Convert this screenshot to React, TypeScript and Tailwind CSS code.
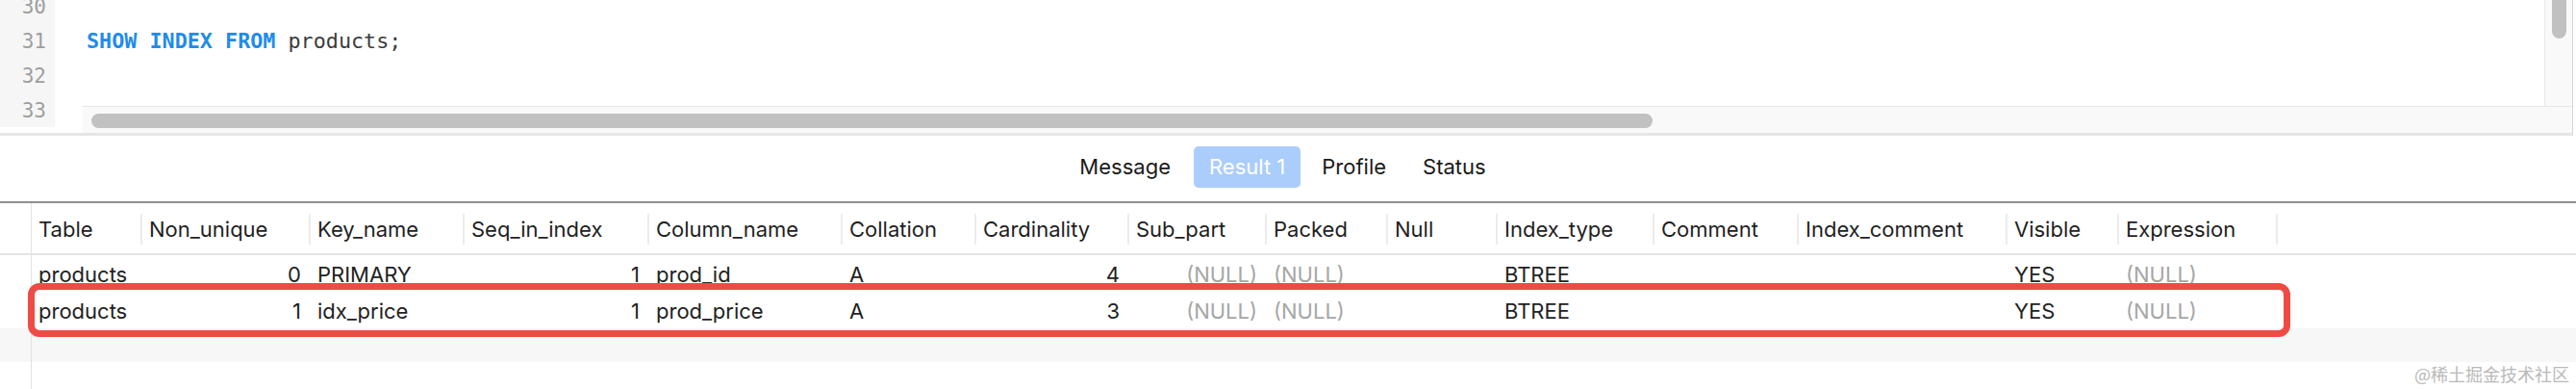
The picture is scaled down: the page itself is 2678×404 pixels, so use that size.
import React from "react";

const lineNumbers = [30, 31, 32, 33];

type Column = { name: string; width: string; right?: boolean };

const columns: Column[] = [
  { name: "Table", width: "w-[115px]" },
  { name: "Non_unique", width: "w-[175px]", right: true },
  { name: "Key_name", width: "w-[160px]" },
  { name: "Seq_in_index", width: "w-[192px]", right: true },
  { name: "Column_name", width: "w-[201px]" },
  { name: "Collation", width: "w-[139px]" },
  { name: "Cardinality", width: "w-[159px]", right: true },
  { name: "Sub_part", width: "w-[143px]", right: true },
  { name: "Packed", width: "w-[126px]" },
  { name: "Null", width: "w-[114px]" },
  { name: "Index_type", width: "w-[163px]" },
  { name: "Comment", width: "w-[150px]" },
  { name: "Index_comment", width: "w-[217px]" },
  { name: "Visible", width: "w-[116px]" },
  { name: "Expression", width: "w-[165px]" },
];

const rows: (string | null)[][] = [
  ["products", "0", "PRIMARY", "1", "prod_id", "A", "4", null, null, "", "BTREE", "", "", "YES", null],
  ["products", "1", "idx_price", "1", "prod_price", "A", "3", null, null, "", "BTREE", "", "", "YES", null],
];

export default function App() {
  return (
    <div className="relative h-[404px] w-[2678px] overflow-hidden bg-white font-['Inter',sans-serif] text-[#1f1f1f]">
      <Editor />
      <Tabs />
      <ResultTable />
      {/* red highlight drawn over the second row */}
      <div className="pointer-events-none absolute left-[29px] top-[294px] h-[56px] w-[2352px] rounded-[12px] border-[7px] border-[#ef4b45]" />
      <span className="absolute bottom-[4px] right-[7px] font-['Noto_Sans_CJK_SC',sans-serif] text-[18px] leading-[24px] text-[#b9b9b9]">
        @稀土掘金技术社区
      </span>
    </div>
  );
}

function Editor() {
  return (
    <div className="relative mr-[3px] h-[141px] overflow-hidden border-r border-b-[3px] border-r-[#d4d4d4] border-b-[#e6e6e6]">
      <div className="-mt-[11px] flex">
        <div className="h-[143px] w-[57px] shrink-0 bg-[#f6f6f6] pr-[9px] text-right font-['DejaVu_Sans_Mono',monospace] text-[21px] leading-[36px] text-[#9e9e9e]">
          {lineNumbers.map((n) => (
            <div key={n}>{n}</div>
          ))}
        </div>
        <div className="flex-1 pl-[33px] font-['DejaVu_Sans_Mono',monospace] text-[21.75px] leading-[36px] whitespace-pre">
          <div> </div>
          <div>
            <span className="font-bold text-[#1f8ceb]">SHOW INDEX FROM</span>
            <span className="text-[#3d3d3d]"> products;</span>
          </div>
        </div>
      </div>
      {/* horizontal scrollbar */}
      <div className="absolute left-[86px] right-0 top-[110px] h-[28px] border-t border-[#e6e6e6] bg-[#f9f9f9]">
        <div className="ml-[9px] mt-[7px] h-[15px] w-[1623px] rounded-full bg-[#c1c1c1]" />
      </div>
      {/* vertical scrollbar */}
      <div className="absolute right-0 top-0 h-[110px] w-[29px] border-l border-[#e8e8e8] bg-[#f9f9f9]">
        <div className="ml-[7px] h-[40px] w-[15px] rounded-b-full bg-[#c1c1c1]" />
      </div>
    </div>
  );
}

function Tabs() {
  return (
    <div className="flex h-[70px] items-start justify-center border-b-2 border-[#8f8f8f] pr-[11px] pt-[11px] text-[22px] text-[#1a1a1a]">
      <span className="mr-[24px] leading-[43px]">Message</span>
      <span className="mr-[22px] rounded-[5px] bg-[#aacdfb] px-[16px] leading-[43px] text-white">Result 1</span>
      <span className="mr-[38px] leading-[43px]">Profile</span>
      <span className="leading-[43px]">Status</span>
    </div>
  );
}

function ResultTable() {
  return (
    <div className="text-[22px]">
      <div className="flex h-[54px] border-b-2 border-[#e4e4e4]">
        <div className="w-[33px] shrink-0 border-r border-[#e2e2e2]" />
        {columns.map((c) => (
          <div key={c.name} className={`${c.width} flex shrink-0 items-center justify-between pl-[7px] pt-[2px]`}>
            <span>{c.name}</span>
            <span className="h-[32px] w-[2px] bg-[#ececec]" />
          </div>
        ))}
      </div>
      {rows.map((row, i) => (
        <div key={i} className="flex h-[38px] items-center pt-[3px]">
          <div className="-mt-[3px] h-[38px] w-[33px] shrink-0 border-r border-[#e2e2e2]" />
          {columns.map((c, j) => (
            <div
              key={c.name}
              className={`${c.width} shrink-0 pl-[7px] pr-[10px] ${c.right ? "text-right" : "text-left"} ${row[j] === null ? "text-[#a6a6a6]" : "text-[#222222]"}`}
            >
              {row[j] === null ? "(NULL)" : row[j]}
            </div>
          ))}
        </div>
      ))}
      <div className="flex h-[35px] bg-[#f7f7f7]">
        <div className="w-[33px] shrink-0 border-r border-[#e2e2e2]" />
      </div>
      <div className="flex h-[40px]">
        <div className="w-[33px] shrink-0 border-r border-[#e2e2e2]" />
      </div>
    </div>
  );
}
